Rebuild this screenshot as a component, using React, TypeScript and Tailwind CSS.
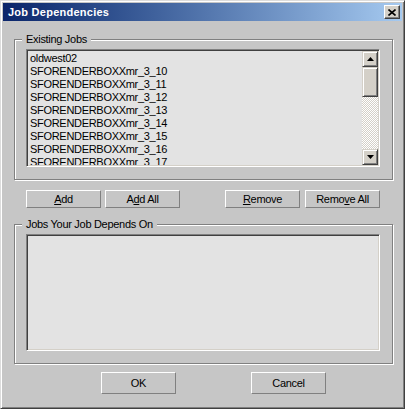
import React from "react";

const existing = [
  "oldwest02",
  "SFORENDERBOXXmr_3_10",
  "SFORENDERBOXXmr_3_11",
  "SFORENDERBOXXmr_3_12",
  "SFORENDERBOXXmr_3_13",
  "SFORENDERBOXXmr_3_14",
  "SFORENDERBOXXmr_3_15",
  "SFORENDERBOXXmr_3_16",
  "SFORENDERBOXXmr_3_17",
];

const raised =
  "border border-t-white border-l-white border-b-[#808080] border-r-[#808080] bg-[#c6c6c6]";

function Btn({ children, h = "h-[18px]" }: { children: React.ReactNode; h?: string }) {
  return (
    <button
      type="button"
      className={`${raised} ${h} w-[75px] flex items-center justify-center text-[11px] tracking-[-0.3px] text-black leading-none`}
    >
      {children}
    </button>
  );
}

function ScrollBtn({ up }: { up?: boolean }) {
  return (
    <div className="w-[16px] h-[16px] bg-[#d4d0c8] border border-t-[#d4d0c8] border-l-[#d4d0c8] border-b-[#404040] border-r-[#404040] shadow-[inset_1px_1px_0_#fff,inset_-1px_-1px_0_#808080] flex items-center justify-center">
      <svg width="7" height="4" viewBox="0 0 7 4">
        {up ? <polygon points="3.5,0 7,4 0,4" fill="#000" /> : <polygon points="0,0 7,0 3.5,4" fill="#000" />}
      </svg>
    </div>
  );
}

function ListBox({ items, h, scroll }: { items: string[]; h: string; scroll?: boolean }) {
  return (
    <div
      className={`w-[354px] ${h} border border-t-[#808080] border-l-[#808080] border-b-white border-r-white p-[1px] shadow-[inset_1px_1px_0_#404040,inset_-1px_-1px_0_#d4d0c8] bg-[#e3e3e3] flex`}
    >
      <div className="flex-1 overflow-hidden pl-[2px] pt-[1px]">
        {items.map((t) => (
          <div key={t} className="h-[13px] leading-[13px] text-[11px] tracking-[-0.3px] text-black whitespace-nowrap">
            {t}
          </div>
        ))}
      </div>
      {scroll && (
        <div className="w-[16px] flex flex-col">
          <ScrollBtn up />
          <div className="h-[30px] bg-[#d4d0c8] border border-t-[#d4d0c8] border-l-[#d4d0c8] border-b-[#404040] border-r-[#404040] shadow-[inset_1px_1px_0_#fff,inset_-1px_-1px_0_#808080]" />
          <div className="flex-1 bg-[repeating-conic-gradient(#ffffff_0_25%,#d4d0c8_0_50%)] bg-[length:2px_2px]" />
          <ScrollBtn />
        </div>
      )}
    </div>
  );
}

function Group({ label, children }: { label: string; children: React.ReactNode }) {
  return (
    <fieldset className="ml-[11px] w-[379px] border border-[#808080] shadow-[inset_1px_1px_0_#fff,1px_1px_0_#fff] pl-[11px] pr-[12px] pt-[3px] pb-[12px]">
      <legend className="ml-[-4px] px-[4px] bg-[#c6c6c6] text-[11px] leading-[13px] tracking-[-0.3px] text-black">
        {label}
      </legend>
      {children}
    </fieldset>
  );
}

export default function App() {
  return (
    <div className="w-[405px] h-[409px] bg-[#c6c6c6] border border-t-[#dcdcdc] border-l-[#dcdcdc] border-b-[#404040] border-r-[#404040] shadow-[inset_1px_1px_0_#fff,inset_-1px_-1px_0_#808080] p-[2px] flex flex-col font-['Liberation_Sans',Arial,sans-serif]">
      {/* caption */}
      <div className="h-[18px] shrink-0 bg-linear-to-r from-[#0a246a] to-[#a6caf0] flex items-center justify-between pl-[5px] pr-[2px]">
        <span className="text-white font-bold text-[11px] tracking-[0.25px]">Job Dependencies</span>
        <div className="w-[16px] h-[14px] bg-[#d4d0c8] border border-t-white border-l-white border-b-[#404040] border-r-[#404040] shadow-[inset_-1px_-1px_0_#808080] flex items-center justify-center">
          <svg width="8" height="7" viewBox="0 0 8 7">
            <path d="M0.5 0.5 L7.5 6.5 M7.5 0.5 L0.5 6.5" stroke="#000" strokeWidth="1.6" />
          </svg>
        </div>
      </div>

      <div className="mt-[12px]">
        <Group label="Existing Jobs">
          <ListBox items={existing} h="h-[118px]" scroll />
        </Group>
      </div>

      <div className="mt-[10px] ml-[23px] w-[354px] flex justify-between">
        <div className="flex gap-[4px]">
          <Btn>
            <u className="underline-offset-[1px]">A</u>dd
          </Btn>
          <Btn>
            A<u className="underline-offset-[1px]">d</u>d All
          </Btn>
        </div>
        <div className="flex gap-[5px]">
          <Btn>
            <u className="underline-offset-[1px]">R</u>emove
          </Btn>
          <Btn>
            Remo<u className="underline-offset-[1px]">v</u>e All
          </Btn>
        </div>
      </div>

      <div className="mt-[10px]">
        <Group label="Jobs Your Job Depends On">
          <ListBox items={[]} h="h-[117px]" />
        </Group>
      </div>

      <div className="mt-[8px] ml-[98px] flex gap-[75px]">
        <Btn h="h-[22px]">OK</Btn>
        <Btn h="h-[22px]">Cancel</Btn>
      </div>
    </div>
  );
}
